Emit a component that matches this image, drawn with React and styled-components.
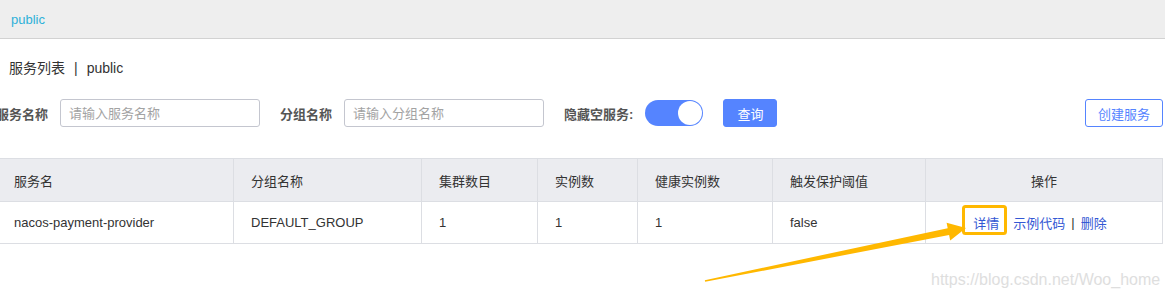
import React from "react";
import styled, { createGlobalStyle } from "styled-components";

const Global = createGlobalStyle`
  html, body { margin: 0; padding: 0; background: #fff; }
  body {
    font-family: "Liberation Sans", Arial, "Noto Sans CJK SC", sans-serif;
    font-size: 13px;
    color: #333;
    overflow: hidden;
  }
  * { box-sizing: border-box; }
`;

const Page = styled.div`
  position: relative;
  width: 1165px;
  height: 298px;
  overflow: hidden;
`;

const TopBar = styled.div`
  height: 39px;
  background: #eeeeee;
  border-bottom: 1px solid #d2d2d2;
  display: flex;
  align-items: center;
  padding-left: 11px;
  color: #2db1d9;
  font-size: 13px;
`;

const Title = styled.div`
  margin-top: 19px;
  padding-left: 9px;
  height: 20px;
  line-height: 20px;
  font-size: 14px;
  color: #333;
  display: flex;
  align-items: center;
`;

const Sep = styled.span`
  margin: 0 9px 0 9px;
`;

const FormRow = styled.div`
  margin-top: 21px;
  margin-left: -4px;
  width: 1167px;
  height: 28px;
  display: flex;
  align-items: center;
`;

const Field = styled.div`
  display: flex;
  align-items: center;
  gap: 12px;
  margin-right: 20px;
`;

const Label = styled.span`
  font-weight: bold;
  font-size: 13px;
  color: #555;
  white-space: nowrap;
`;

const Input = styled.input`
  width: 200px;
  height: 28px;
  border: 1px solid #c4c6cf;
  border-radius: 3px;
  padding: 0 8px;
  font-size: 13px;
  font-family: inherit;
  color: #333;
  outline: none;
  &::placeholder { color: #a3a3a3; }
`;

const Switch = styled.div`
  width: 58px;
  height: 26px;
  border-radius: 13px;
  background: #5584ff;
  display: flex;
  align-items: center;
  justify-content: flex-end;
  padding-right: 1px;
`;

const Knob = styled.div`
  width: 24px;
  height: 24px;
  border-radius: 50%;
  background: #fff;
`;

const Button = styled.button`
  height: 28px;
  padding: 0 ${(p) => (p.$outline ? "12px" : "13px")};
  border-radius: 3px;
  font-size: 13px;
  font-family: inherit;
  border: 1px solid #5584ff;
  background: ${(p) => (p.$outline ? "#fff" : "#5584ff")};
  color: ${(p) => (p.$outline ? "#5584ff" : "#fff")};
  cursor: pointer;
  margin-left: ${(p) => (p.$push ? "auto" : "0")};
`;

const Table = styled.table`
  margin-top: 31px;
  margin-left: -4px;
  width: 1166px;
  border-collapse: collapse;
  table-layout: fixed;
  font-size: 13px;
`;

const Th = styled.th`
  height: 43px;
  background: #ebecf0;
  border: 1px solid #dcdee3;
  font-weight: normal;
  color: #333;
  text-align: ${(p) => (p.$center ? "center" : "left")};
  padding: 0 0 0 ${(p) => (p.$center ? "0" : "17px")};
`;

const Td = styled.td`
  height: 42px;
  border: 1px solid #dcdee3;
  color: #333;
  text-align: ${(p) => (p.$center ? "center" : "left")};
  padding: 0 0 0 ${(p) => (p.$center ? "0" : "17px")};
`;

const Link = styled.a`
  color: #3358d4;
  text-decoration: none;
  cursor: pointer;
  margin-right: ${(p) => (p.$gap ? "14px" : "0")};
`;

const Links = styled.div`
  display: flex;
  justify-content: center;
  align-items: center;
  padding-right: 8px;
`;

const LinkSep = styled.span`
  color: #333;
  margin: 0 6px;
`;

const Overlay = styled.svg`
  position: absolute;
  left: 0;
  top: 0;
  pointer-events: none;
`;

const Watermark = styled.div`
  position: absolute;
  left: 931px;
  top: 271px;
  font-size: 16px;
  font-family: "Liberation Sans", Arial, sans-serif;
  color: #dedede;
  white-space: nowrap;
`;

const cols = [237, 188, 116, 100, 135, 153, 237];
const headers = ["服务名", "分组名称", "集群数目", "实例数", "健康实例数", "触发保护阈值"];
const row = ["nacos-payment-provider", "DEFAULT_GROUP", "1", "1", "1", "false"];

export default function App() {
  return (
    <Page>
      <Global />
      <TopBar>public</TopBar>
      <Title>
        服务列表<Sep>|</Sep>public
      </Title>
      <FormRow>
        <Field>
          <Label>服务名称</Label>
          <Input placeholder="请输入服务名称" />
        </Field>
        <Field>
          <Label>分组名称</Label>
          <Input placeholder="请输入分组名称" />
        </Field>
        <Field>
          <Label>隐藏空服务:</Label>
          <Switch>
            <Knob />
          </Switch>
        </Field>
        <Button>查询</Button>
        <Button $outline $push>创建服务</Button>
      </FormRow>
      <Table>
        <colgroup>
          {cols.map((w, i) => (
            <col key={i} style={{ width: w }} />
          ))}
        </colgroup>
        <thead>
          <tr>
            {headers.map((h) => (
              <Th key={h}>{h}</Th>
            ))}
            <Th $center>操作</Th>
          </tr>
        </thead>
        <tbody>
          <tr>
            {row.map((c, i) => (
              <Td key={i}>{c}</Td>
            ))}
            <Td $center>
              <Links>
                <Link $gap>详情</Link>
                <Link>示例代码</Link>
                <LinkSep>|</LinkSep>
                <Link>删除</Link>
              </Links>
            </Td>
          </tr>
        </tbody>
      </Table>
      <Watermark>https://blog.csdn.net/Woo_home</Watermark>
      <Overlay width="1165" height="298" viewBox="0 0 1165 298">
        <rect x="963.5" y="206.5" width="42" height="27" rx="2" fill="none" stroke="#ffb800" strokeWidth="3" />
        <polygon
          points="705.2,281.8 949.1,235 950.2,240.4 966,228 946.6,222.8 947.7,228.2 704.8,280.2"
          fill="#ffb800"
        />
      </Overlay>
    </Page>
  );
}
